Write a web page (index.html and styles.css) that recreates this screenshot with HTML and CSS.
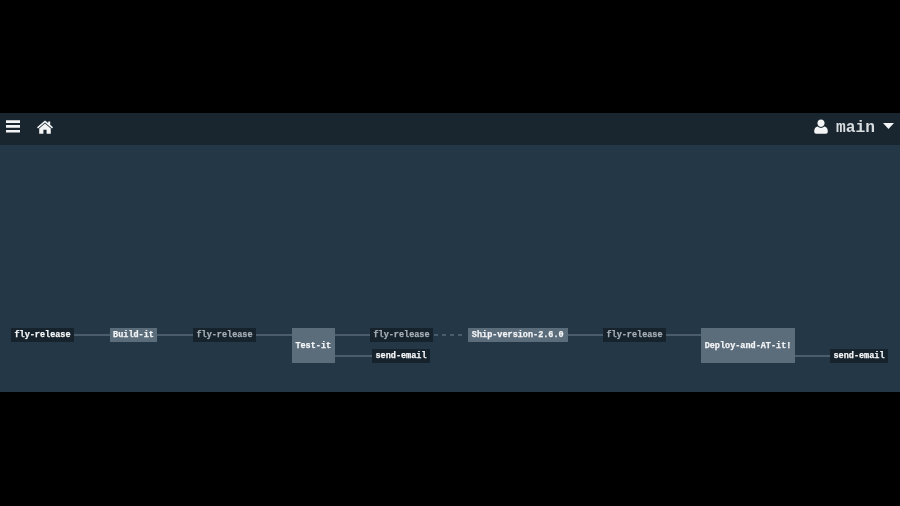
FILE: index.html
```html
<!DOCTYPE html>
<html lang="en">
<head>
<meta charset="utf-8">
<title>Pipeline</title>
<link rel="stylesheet" href="styles.css">
</head>
<body>
<div class="app">
  <header class="topbar">
    <svg class="icon-menu" viewBox="0 0 14 13"><path d="M0 0.3h14v2.7H0zM0 5.1h14v2.7H0zM0 9.9h14v2.7H0z"/></svg>
    <svg class="icon-home" viewBox="0 0 16 14"><path d="M8 0.4 11.2 3.1V1.4H13.2V4.8L16 7.2 15 8.4 8 2.6 1 8.4 0 7.2ZM8 3.6 13.8 8.4V13.8H9.6V9.8H6.4V13.8H2.2V8.4Z"/></svg>
    <div class="user">
      <svg class="icon-user" viewBox="0 0 14 15"><path d="M7 0.4C9.1 0.4 10.6 2 10.6 4.1 10.6 6.2 9.1 7.9 7 7.9 4.9 7.9 3.4 6.2 3.4 4.1 3.4 2 4.9 0.4 7 0.4ZM3.7 7.6C4.6 8.5 5.7 9 7 9 8.3 9 9.4 8.5 10.3 7.6 12.6 7.8 13.8 9.6 13.8 12.6 13.8 14 13 14.8 11.7 14.8H2.3C1 14.8 0.2 14 0.2 12.6 0.2 9.6 1.4 7.8 3.7 7.6Z"/></svg>
      <span class="user-name">main</span>
      <svg class="icon-caret" viewBox="0 0 11 6"><path d="M0 0H11L5.5 6Z"/></svg>
    </div>
  </header>
  <main class="canvas">
    <svg class="links" viewBox="0 0 900 247">
      <path class="link" d="M74 190H110M157 190H193M256 190H292M334 190H370M334 211H372M567 190H603M666 190H701M795 211H830"/>
      <path class="link link-dashed" d="M434 190H466"/>
    </svg>
    <div class="node job n1">fly-release</div>
    <div class="node stage n2">Build-it</div>
    <div class="node job dim n3">fly-release</div>
    <div class="node stage tall n4">Test-it</div>
    <div class="node job dim n5">fly-release</div>
    <div class="node job n6">send-email</div>
    <div class="node stage n7">Ship-version-2.6.0</div>
    <div class="node job dim n8">fly-release</div>
    <div class="node stage tall n9">Deploy-and-AT-it!</div>
    <div class="node job n10">send-email</div>
  </main>
</div>
</body>
</html>
```
FILE: styles.css
```css
* { box-sizing: border-box; }
html, body { margin: 0; height: 100%; background: #000; overflow: hidden; }
body { display: flex; align-items: flex-start; padding-top: 113px; }
.app { width: 900px; height: 279px; display: flex; flex-direction: column; filter: blur(0.5px); }
.topbar {
  height: 32px; flex: none; display: flex; align-items: center;
  background: #1a262f; padding: 0 6px 5px 6px; color: #f2f4f5;
}
.topbar svg { fill: #f2f4f5; display: block; flex: none; }
.icon-menu { width: 14px; height: 13px; }
.icon-home { width: 16px; height: 14px; margin-left: 17px; }
.user { margin-left: auto; display: flex; align-items: center; }
.icon-user { width: 14px; height: 15px; }
.user-name {
  font: bold 16.25px/20px "Liberation Mono", "DejaVu Sans Mono", monospace;
  margin-left: 8px; margin-top: 2px; color: #d8dde0;
}
.icon-caret { width: 11px; height: 6px; margin-left: 8px; margin-top: -2px; }
.canvas { flex: 1; position: relative; background: #233746; }
.links { position: absolute; inset: 0; width: 900px; height: 247px; }
.link { fill: none; stroke: #5a6b7a; stroke-width: 1.5; }
.link-dashed { stroke-dasharray: 4 4; }
.node {
  position: absolute; height: 14px; display: flex; align-items: center; justify-content: center;
  font: bold 8.5px/14px "Liberation Mono", "DejaVu Sans Mono", monospace;
  -webkit-text-stroke: 0.25px currentColor;
  color: #f4f6f7; white-space: nowrap;
}
.job { background: #17232c; }
.dim { color: #a5aeb5; }
.stage { background: #5b6c7b; }
.tall { height: 35px; }
.n1 { left: 11px; top: 183px; width: 63px; }
.n2 { left: 110px; top: 183px; width: 47px; }
.n3 { left: 193px; top: 183px; width: 63px; }
.n4 { left: 292px; top: 183px; width: 42.5px; }
.n5 { left: 370px; top: 183px; width: 63px; }
.n6 { left: 372px; top: 204px; width: 58px; }
.n7 { left: 468px; top: 183px; width: 99.5px; }
.n8 { left: 603px; top: 183px; width: 63px; }
.n9 { left: 701px; top: 183px; width: 94px; }
.n10 { left: 830px; top: 204px; width: 58px; }
```
